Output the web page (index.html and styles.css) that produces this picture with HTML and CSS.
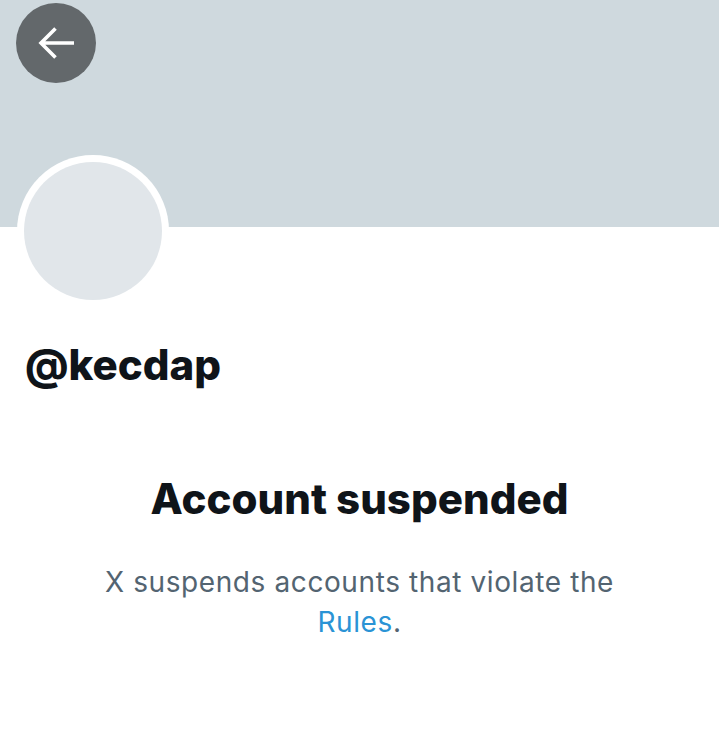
FILE: index.html
```html
<!DOCTYPE html>
<html lang="en">
<head>
<meta charset="utf-8">
<title>@kecdap</title>
<link rel="stylesheet" href="styles.css">
</head>
<body>
<div class="page">
  <header class="banner">
    <button class="back" aria-label="Back">
      <svg viewBox="0 0 80 80" width="80" height="80"><path d="M58 40H25M39.5 25.5L25 40l14.5 14.5" fill="none" stroke="#fff" stroke-width="3.6" stroke-linecap="butt" stroke-linejoin="miter"/></svg>
    </button>
  </header>
  <div class="profile">
    <div class="avatar"><div class="avatar-inner"></div></div>
    <div class="handle">@kecdap</div>
  </div>
  <section class="notice">
    <h1 class="title">Account suspended</h1>
    <p class="desc">X suspends accounts that violate the <a class="link" href="#">Rules</a>.</p>
  </section>
</div>
</body>
</html>
```
FILE: styles.css
```css
* { box-sizing: border-box; }
html, body { margin: 0; padding: 0; background: #fff; }
body { font-family: Inter, Roboto, "Noto Sans", sans-serif; color: #0f1419; }
.page { width: 719px; height: 746px; overflow: hidden; }
.banner { position: relative; height: 227px; background: #cfd9de; }
.back {
  position: absolute; left: 16px; top: 3px;
  width: 80px; height: 80px; border-radius: 50%;
  border: 0; padding: 0; background: #63686b;
  display: flex; align-items: center; justify-content: center;
}
.profile { position: relative; padding-left: 17px; }
.avatar {
  width: 152px; height: 152px; border-radius: 50%;
  background: #fff; margin-top: -72px; padding: 7px;
}
.avatar-inner { width: 138px; height: 138px; border-radius: 50%; background: #e1e6ea; }
.handle {
  margin: 33px 0 0 8px; font-size: 42px; font-weight: 800; line-height: 50px;
}
.notice { text-align: center; margin-top: 84px; }
.title { margin: 0; font-size: 42px; font-weight: 800; line-height: 50px; }
.desc { margin: 38px auto 0; width: 540px; font-size: 28px; line-height: 40px; letter-spacing: 0.6px; color: #536471; }
.link { color: #2a93d5; text-decoration: none; }
```
